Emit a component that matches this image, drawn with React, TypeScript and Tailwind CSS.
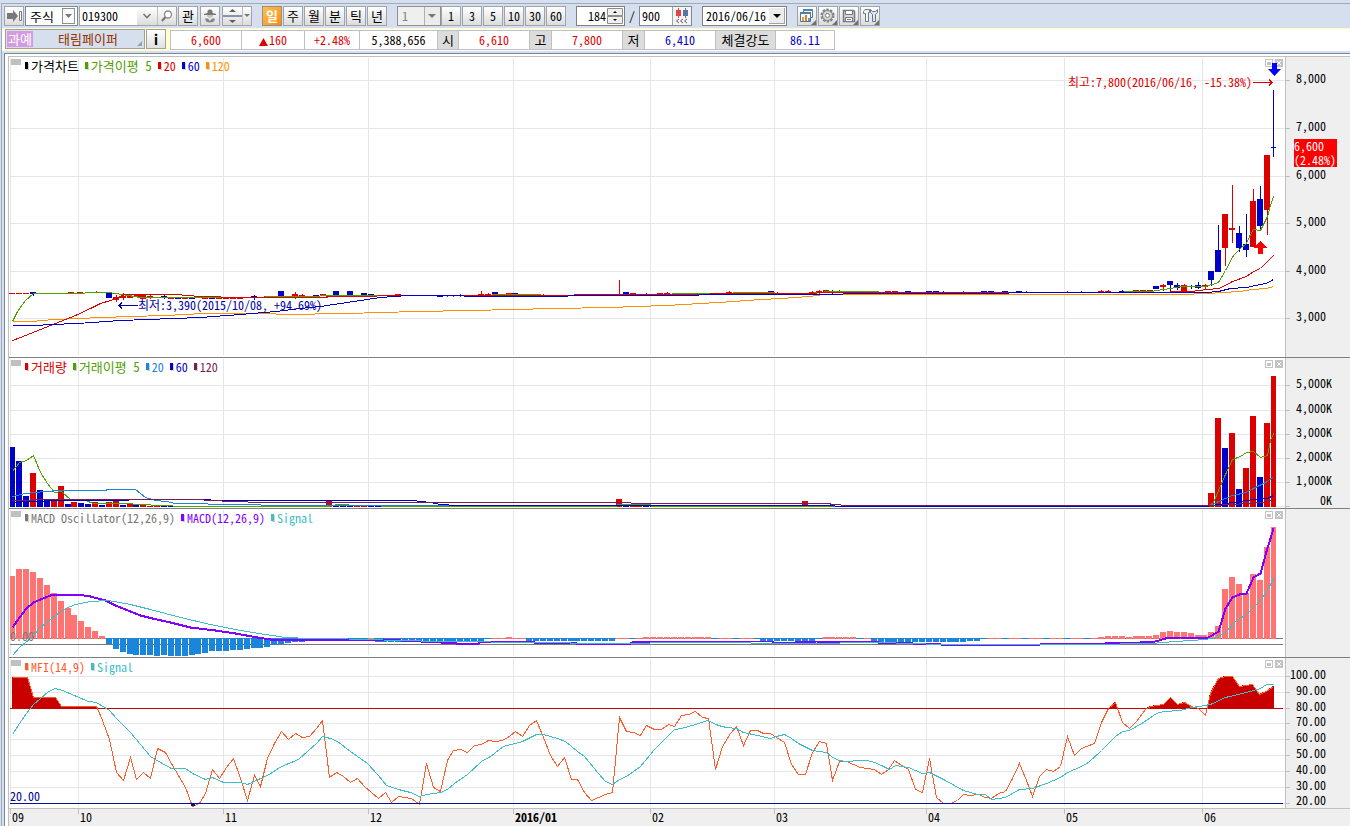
import React from "react";

const RED = "#dc0000";
const BLUE = "#0000c8";
const GREEN = "#50a000";
const ORANGE = "#ff9100";
const SKY = "#1986dc";
const MAROON = "#781e50";
const SALMON = "#ff7373";
const TEAL = "#3cbec8";
const PURPLE = "#8200ff";
const GREY = "#787878";
const CORAL = "#ff5a28";
const GRID = "#e6e6e6";

const LEFT = 9;
const PLOT_WIDTH = 1276;
const BAR_COUNT = 184;
const barX = (i: number) => Math.round(12.4 + (i * 1261) / (BAR_COUNT - 1));
const barBox = (i: number) => {
  if (i === 0) return { x: 10, width: 5 };
  if (i === BAR_COUNT - 1) return { x: 1271, width: 5 };
  return { x: barX(i) - 3, width: 6 };
};

const months = [
  { x: 10, label: "09" },
  { x: 78, label: "10" },
  { x: 223, label: "11" },
  { x: 368, label: "12" },
  { x: 513, label: "2016/01", bold: true },
  { x: 650, label: "02" },
  { x: 774, label: "03" },
  { x: 926, label: "04" },
  { x: 1064, label: "05" },
  { x: 1202, label: "06" },
];

/* ---------- chart data ---------- */

const priceMa5 =
  "12,321 17,311 25,300 33,293 84,293 85,292 108,292 122,294 140,297 230,297 300,296 340,295 400,295 491,295 492,294 540,294 541,295 600,295 640,294 671,294 672,293 732,293 733,292 774,292 775,293 808,293 829,291 878,291 879,292 1015,292 1097,292 1150,291 1170,288 1180,286 1205,286 1218,282 1225,270 1233,255 1240,248 1246,243 1250,234 1253,229 1260,230 1267,216 1270,205 1273,196";
const priceMa20 =
  "12,340 20,337 35,331 60,321 75,315 90,308 100,303 110,300 118,297 124,294 175,294 200,296 240,297 300,297 355,296 400,295 568,295 580,294 700,294 719,293 816,293 817,292 1091,292 1150,292 1190,291 1207,289 1218,288 1225,285 1232,281 1246,276 1253,271 1260,268 1266,262 1273,255";
const priceMa60 =
  "12,325 36,325 50,324 77,323 120,320 200,317 240,314 275,311 300,308 320,306 360,300 380,297 408,295 463,295 464,296 567,296 568,295 698,295 699,294 842,294 843,293 1008,293 1009,292 1205,292 1218,291 1230,288 1246,287 1260,284 1266,283 1273,279";
const priceMa120 =
  "12,321 31,321 53,319 102,317 130,316 165,315 203,313 265,313 285,314 345,313 382,312 415,311 471,310 512,309 554,308 609,307 637,306 664,305 685,304 699,303 719,302 733,301 747,300 761,299 781,298 795,297 809,296 823,294 1180,294 1208,293 1222,292 1240,291 1252,289 1266,288 1273,286";

type Candle = [x: number, top: number, bottom: number, color: string, high?: number, low?: number];
const candles: Candle[] = [
  [12, 293, 294, RED], [19, 293, 294, RED], [26, 293, 294, RED],
  [33, 292, 294, BLUE, 292, 296], [47, 293, 294, RED], [61, 293, 294, RED],
  [71, 292, 293, RED], [80, 292, 293, RED], [96, 292, 293, RED, 291, 293],
  [109, 292, 298, BLUE], [116, 297, 300, RED, 295, 302], [123, 296, 298, RED, 293, 300],
  [130, 296, 298, RED], [137, 295, 297, RED], [143, 295, 299, RED], [150, 296, 298, RED, 295, 299],
  [157, 297, 298, RED], [164, 296, 298, BLUE, 295, 299], [171, 297, 299, RED],
  [178, 297, 299, BLUE], [185, 297, 299, RED], [192, 297, 299, BLUE],
  [199, 296, 298, BLUE], [205, 297, 299, RED], [212, 297, 299, BLUE],
  [219, 297, 299, RED], [226, 297, 299, RED], [233, 298, 299, RED],
  [240, 298, 299, RED], [247, 297, 298, BLUE], [254, 296, 298, BLUE, 295, 300],
  [261, 297, 298, RED], [267, 296, 297, RED], [274, 296, 297, RED],
  [281, 291, 297, BLUE], [288, 296, 298, BLUE], [295, 294, 298, RED, 292, 299],
  [302, 295, 297, RED, 294, 298], [309, 296, 297, RED], [316, 295, 297, BLUE],
  [323, 294, 296, RED], [329, 295, 297, RED], [336, 291, 295, BLUE], [343, 295, 296, RED],
  [350, 291, 295, BLUE], [357, 295, 296, RED], [364, 293, 295, BLUE], [371, 294, 296, BLUE],
  [384, 295, 296, BLUE], [398, 294, 296, RED], [412, 295, 296, RED],
  [426, 295, 296, BLUE], [433, 295, 296, RED], [440, 295, 297, BLUE],
  [447, 295, 296, RED, 295, 297], [453, 295, 296, RED, 295, 297], [460, 295, 296, RED, 294, 297],
  [481, 294, 296, RED, 291, 296], [488, 294, 296, RED, 293, 296], [495, 292, 295, BLUE],
  [509, 293, 295, RED], [515, 293, 295, BLUE], [543, 295, 296, RED, 294, 296],
  [577, 294, 296, BLUE], [619, 294, 295, RED, 280, 295], [626, 292, 295, BLUE], [633, 293, 295, RED],
  [646, 294, 295, RED, 293, 295], [660, 293, 295, RED], [667, 293, 295, RED, 292, 295],
  [729, 292, 294, RED, 291, 294], [771, 291, 293, BLUE], [777, 293, 294, RED, 292, 294],
  [812, 292, 294, RED, 291, 294], [819, 291, 293, RED, 290, 295], [826, 290, 293, RED],
  [832, 292, 293, BLUE, 290, 294], [839, 292, 293, RED, 290, 293],
  [888, 291, 293, RED], [895, 291, 293, RED], [908, 291, 293, BLUE],
  [929, 291, 293, BLUE], [936, 291, 293, BLUE], [943, 292, 293, BLUE, 291, 293],
  [963, 292, 293, RED, 291, 293], [984, 291, 293, BLUE], [991, 291, 293, BLUE],
  [1005, 291, 293, BLUE], [1019, 291, 293, BLUE], [1026, 292, 293, BLUE, 291, 293],
  [1067, 292, 293, RED, 291, 293], [1081, 292, 293, BLUE, 291, 293],
  [1101, 291, 292, RED, 290, 292], [1108, 291, 292, RED, 290, 292], [1122, 291, 292, BLUE, 290, 292],
  [1136, 290, 292, RED], [1143, 290, 292, RED], [1150, 290, 292, RED],
  [1156, 286, 289, BLUE], [1163, 285, 287, RED, 284, 291], [1170, 281, 285, BLUE, 281, 291],
  [1177, 285, 288, BLUE, 283, 290], [1184, 285, 291, RED, 284, 291], [1191, 286, 287, BLUE, 285, 289],
  [1198, 285, 288, BLUE, 282, 289], [1205, 285, 287, RED, 284, 290],
  [1211, 271, 280, BLUE, 271, 286], [1218, 250, 272, BLUE, 225, 272], [1225, 214, 248, RED, 214, 266],
  [1232, 228, 230, RED, 185, 243], [1239, 233, 248, BLUE, 226, 252], [1246, 244, 250, BLUE, 214, 257],
  [1253, 201, 247, RED, 189, 247], [1260, 199, 226, BLUE, 186, 229], [1267, 155, 210, RED, 155, 235],
  [1273, 147, 148, BLUE, 90, 157],
];

const volumeBars: Record<number, [top: number, color: string]> = {
  0: [447, BLUE], 1: [461, BLUE], 2: [496, BLUE], 3: [473, RED], 4: [490, BLUE], 5: [500, BLUE],
  6: [500, RED], 7: [486, RED], 8: [504, BLUE], 9: [502, RED], 10: [503, BLUE], 11: [504, BLUE],
  12: [502, RED], 13: [505, BLUE], 14: [502, RED], 15: [499, RED], 16: [505, BLUE], 17: [503, RED],
  18: [505, BLUE], 19: [504, RED], 46: [501, RED], 88: [499, RED], 115: [501, RED],
  174: [493, RED], 175: [418, RED], 176: [448, BLUE], 177: [433, RED], 178: [489, BLUE],
  179: [468, RED], 180: [416, RED], 181: [477, BLUE], 182: [423, RED], 183: [376, RED],
};
const volMa5 =
  "12,471 19,462 26,460 33,455 40,472 47,483 54,492 61,491 70,499 85,500 93,503 120,503 145,504 155,505 190,506 330,506 336,504 360,505 400,506 616,506 617,504 650,504 651,506 1209,505 1213,502 1218,490 1225,474 1232,459 1240,456 1246,452 1253,451 1260,457 1267,455 1270,440 1273,433";
const volMa20 =
  "12,496 25,493 45,491 61,490 105,490 107,489 135,489 145,497 155,500 166,501 175,503 200,503 215,504 305,505 454,505 1205,506 1211,505 1218,501 1232,495 1246,492 1253,488 1267,481 1273,476";
const volMa60 =
  "12,502 25,501 70,500 190,499 230,500 412,500 430,502 440,504 457,505 1205,506 1211,505 1232,502 1246,500 1260,498 1267,498 1273,495";
const volMa120 =
  "12,500 60,499 195,499 230,501 265,502 630,502 631,503 829,503 831,504 849,505 1211,505 1232,504 1260,502 1273,500";

const oscEarly = [
  576, 569, 569, 572, 578, 585, 593, 601, 608, 615, 621, 627, 631, 636, 644, 649, 652, 654, 655, 655, 655, 656,
  655, 656, 656, 656, 655, 654, 653, 651, 651, 651, 650, 650, 649, 648, 648, 647, 645, 644, 643, 642, 642, 641,
  641, 640, 641, 640, 641, 641, 640, 640,
];
const oscLate = [
  637, 636, 636, 636, 637, 636, 636, 636, 635, 632, 631, 632, 632, 633, 635, 635, 632, 626, 589, 577, 584, 593,
  574, 580, 547, 527,
];
const oscMiddle: [from: number, to: number, y: number][] = [
  [376, 478, 642], [479, 484, 641], [506, 512, 637], [526, 616, 641], [643, 712, 637],
  [760, 815, 641], [823, 857, 637], [871, 878, 641], [878, 965, 642], [966, 980, 641],
];
const oscillator = Array.from({ length: BAR_COUNT }, (_, i) => {
  if (i < oscEarly.length) return oscEarly[i];
  const late = i - (BAR_COUNT - oscLate.length);
  if (late >= 0) return oscLate[late];
  const span = oscMiddle.find(([a, b]) => barX(i) >= a && barX(i) <= b);
  return span ? span[2] : i % 3 ? 638 : 639;
});
const macdLine =
  "12,627 19,617 26,608 33,602 40,599 50,595 55,594 77,594 90,596 105,600 115,605 125,609 140,615 152,618 170,622 190,627 215,630 235,633 257,637 270,639 370,639 400,640 440,642 456,643 478,643 480,641 532,641 534,642 574,642 576,643 630,643 632,642 678,641 772,641 774,643 795,642 816,641 875,641 878,642 910,642 912,643 940,644 980,645 1040,644 1084,643 1105,643 1140,642 1155,641 1165,638 1180,637 1208,637 1218,631 1222,618 1225,608 1232,597 1239,594 1246,593 1253,577 1260,573 1266,551 1270,538 1273,528";
const macdSignal =
  "12,655 20,646 30,638 40,627 55,615 65,608 75,604 90,601 108,600 130,604 150,609 180,617 210,624 240,630 265,634 285,637 310,638 330,638 400,640 440,641 540,642 600,643 700,642 800,643 880,642 940,644 1090,644 1150,643 1175,641 1205,639 1216,637 1225,632 1235,621 1246,614 1260,600 1267,590 1273,578";

const mfiLine =
  "12,677 27,677 33,697 55,697 61,706 96,706 97,708 102,720 109,739 116,772 123,780 130,757 136,779 143,772 150,778 157,748 165,752 172,765 178,775 185,787 192,806 199,803 205,793 212,769 219,778 226,767 233,758 240,778 247,800 254,775 260,786 267,758 274,743 281,731 288,739 295,733 302,737 309,736 316,728 322,720 329,777 336,772 343,776 350,782 357,778 364,786 378,798 385,792 391,802 398,796 411,798 419,804 426,763 433,787 440,791 447,760 453,750 460,749 467,752 474,745 481,744 488,740 495,741 502,740 509,736 515,731 522,736 529,725 536,720 543,737 550,755 557,766 564,757 571,779 577,779 584,792 591,800 605,794 612,792 619,717 626,731 633,732 640,735 646,725 654,729 661,729 668,724 674,726 681,715 688,714 695,711 702,717 708,718 715,769 722,746 730,733 736,726 743,745 750,730 757,730 763,733 770,733 776,737 784,742 791,764 798,774 805,774 812,752 819,741 826,743 832,780 839,761 846,761 860,767 866,768 874,769 881,774 888,769 894,760 901,765 908,769 915,789 922,792 929,758 936,797 943,803 950,803 957,800 963,794 970,795 978,794 985,797 991,798 998,793 1005,791 1012,778 1019,763 1026,780 1032,796 1039,776 1046,769 1053,771 1060,766 1067,736 1074,755 1081,748 1094,743 1101,722 1108,708 1115,702 1122,722 1129,728 1136,721 1145,709 1150,706 1163,704 1170,697 1177,704 1184,702 1191,706 1198,708 1205,715 1210,693 1218,678 1225,676 1232,676 1239,686 1252,684 1259,694 1266,691 1273,686";
const mfiSignal =
  "12,734 19,723 26,713 33,704 40,698 48,691 55,688 62,690 88,701 96,702 109,710 116,718 130,732 140,744 150,756 160,762 171,768 185,768 192,773 205,779 212,777 223,782 240,782 247,784 260,778 267,775 281,766 298,759 308,750 316,743 322,736 330,738 337,741 350,751 367,763 378,775 386,785 398,789 410,792 419,796 426,794 440,792 447,789 454,783 467,774 481,761 490,756 503,746 522,741 536,734 543,734 557,738 565,741 577,751 584,756 598,773 605,781 612,784 619,779 626,776 640,766 654,749 667,736 674,729 681,728 695,724 707,720 718,725 726,727 736,728 743,732 757,735 770,738 776,736 784,734 791,738 798,743 812,750 819,751 826,752 832,757 839,760 846,761 860,760 867,760 874,762 881,765 889,769 895,765 908,767 922,773 929,772 943,779 963,790 977,794 985,794 991,799 1005,797 1019,789 1032,788 1046,783 1060,777 1067,772 1074,769 1081,766 1088,762 1101,750 1115,736 1122,731 1129,730 1143,722 1156,713 1163,711 1180,710 1191,707 1205,705 1210,704 1225,697 1246,692 1260,688 1266,684 1273,684";

/* ---------- toolbar pieces ---------- */

const btn =
  "flex h-5 w-5 shrink-0 items-center justify-center border border-[#a0a4aa] bg-linear-to-b from-white to-[#dcdcdc] text-black";

function IconButton({ label, children }: { label: string; children: React.ReactNode }) {
  return (
    <button type="button" aria-label={label} className={btn}>
      {children}
    </button>
  );
}

function TextButton({ children, active = false }: { children: string; active?: boolean }) {
  return (
    <button
      type="button"
      aria-pressed={active}
      className={
        active
          ? "flex h-5 w-5 shrink-0 items-center justify-center border border-[#909090] bg-linear-to-br from-[#ffc04a] to-[#ff8a00] font-bold text-white"
          : btn
      }
    >
      {children}
    </button>
  );
}

function Corner() {
  return <path d="M18 13v5h-5z" fill="#707070" />;
}

function Toolbar() {
  return (
    <div className="flex h-6 items-start pt-0.5 pl-0.5">
      <IconButton label="이동">
        <svg width="18" height="18" viewBox="0 0 18 18">
          <path d="M2 6h6V3l5 6-5 6v-3H2z" fill="#787878" />
          <path d="M14.5 4.500h2v9h-2z" fill="#fff" stroke="#787878" />
        </svg>
      </IconButton>
      <div className="relative ml-px h-5 w-[53px] shrink-0">
        <select aria-label="종목 구분" className="h-5 w-full appearance-none border border-[#808890] bg-white pl-1 text-[13px] leading-none">
          <option>주식</option>
        </select>
        <svg className="pointer-events-none absolute top-0.5 right-0.5" width="14" height="16" viewBox="0 0 14 16">
          <rect x=".5" y=".5" width="12" height="15" fill="#fafafa" stroke="#909090" />
          <path d="M3 6h7L6.500 10z" fill="#787878" />
        </svg>
      </div>
      <div className="ml-px flex h-5 shrink-0 border border-[#a0a4aa] bg-white">
        <input aria-label="종목코드" defaultValue="019300" className="w-[57px] pl-0.5 outline-none" />
        <button type="button" aria-label="종목 목록" className="flex w-5 items-center justify-center bg-linear-to-b from-white to-[#dcdcdc]">
          <svg width="10" height="8" viewBox="0 0 10 8">
            <path d="M1.500 2 5 5.500 8.500 2" fill="none" stroke="#787878" strokeWidth="1.600" />
          </svg>
        </button>
        <button type="button" aria-label="검색" className="flex w-[19px] items-center justify-center border-l border-[#c0c0c0] bg-linear-to-b from-white to-[#dcdcdc]">
          <svg width="14" height="14" viewBox="0 0 14 14">
            <circle cx="8" cy="5.500" r="3.500" fill="#fff" stroke="#888" strokeWidth="1.300" />
            <path d="M5.500 8 2 12" stroke="#787878" strokeWidth="2" />
          </svg>
        </button>
      </div>
      <div className="ml-px flex gap-0.5 text-[13px]">
        <TextButton>관</TextButton>
        <IconButton label="관심 고객">
          <svg width="16" height="16" viewBox="0 0 16 16">
            <path d="M5.500 5V3L7 1.500h2L10.500 3v2L14 6v1H2V6z" fill="#787878" />
            <path d="M5 7h6v1q-1 2-3 2T5 8z" fill="#c4c4c4" />
            <path d="M3 10.500h3L8 13l2-2.500h3l-1 3q-4 2-8 0z" fill="#888" />
          </svg>
        </IconButton>
        <div className="flex h-5 border border-[#a0a4aa]">
          <button type="button" aria-label="위아래 이동" className="flex w-[19px] items-center justify-center bg-linear-to-b from-white to-[#dcdcdc]">
            <svg width="19" height="18" viewBox="0 0 19 18">
              <path d="M6 5h7L9.500 2z M6 13h7l-3.500 3z" fill="#606060" />
              <path d="M0 8h19v2H0z" fill="#8794a5" />
            </svg>
          </button>
          <button type="button" aria-label="이동 옵션" className="flex w-[9px] items-center justify-center border-l border-[#c0c0c0] bg-linear-to-b from-white to-[#dcdcdc]">
            <svg width="6" height="4" viewBox="0 0 6 4">
              <path d="M0 0h6L3 3z" fill="#787878" />
            </svg>
          </button>
        </div>
      </div>
      <div className="ml-2.5 flex gap-px text-[13px]">
        <TextButton active>일</TextButton>
        <TextButton>주</TextButton>
        <TextButton>월</TextButton>
        <TextButton>분</TextButton>
        <TextButton>틱</TextButton>
        <TextButton>년</TextButton>
      </div>
      <div className="relative ml-2.5 h-5 w-11 shrink-0">
        <select aria-label="간격" className="h-5 w-full appearance-none border border-[#909090] bg-[#efefef] pl-1 leading-none text-[#808080]">
          <option>1</option>
        </select>
        <svg className="pointer-events-none absolute top-px right-px" width="16" height="18" viewBox="0 0 16 18">
          <rect width="16" height="18" fill="#ececec" />
          <path d="M0 0h1v18H0z" fill="#b0b0b0" />
          <path d="M4 7h8l-4 4z" fill="#787878" />
        </svg>
      </div>
      <div className="flex gap-px">
        <TextButton>1</TextButton>
        <TextButton>3</TextButton>
        <TextButton>5</TextButton>
        <TextButton>10</TextButton>
        <TextButton>30</TextButton>
        <TextButton>60</TextButton>
      </div>
      <div className="ml-2.5 flex h-5 shrink-0 border border-[#808080] bg-white">
        <input aria-label="표시 개수" defaultValue="184" className="w-[29px] text-right outline-none" />
        <button type="button" aria-label="개수 조절">
          <svg width="18" height="18" viewBox="0 0 18 18">
            <path d="M1.500 1.500h15v7h-15z M1.500 9.500h15v7h-15z" fill="#f0f0f0" stroke="#8c8c8c" />
            <path d="M7 6h4L9 4z M7 12h4l-2 2z" fill="#000" />
          </svg>
        </button>
      </div>
      <span className="w-3.5 text-center leading-5">/</span>
      <div className="flex h-5 shrink-0 border border-[#808890] bg-white">
        <input aria-label="전체 개수" defaultValue="900" className="w-8 pl-0.5 outline-none" />
        <button type="button" aria-label="데이터 추가" className="border-l border-[#a0a4aa] bg-[#f4f4f4]">
          <svg width="18" height="18" viewBox="0 0 18 18">
            <path d="M3 3h5v6H3z M5 1h1v10H5z" fill="#e04848" />
            <path d="M10 3h5v6h-5z M12 1h1v10h-1z" fill="#5878a0" />
            <path d="m6 12-2.500 2L6 16M10 12l-2.500 2 2.500 2M14 12l-2.500 2 2.500 2" fill="none" stroke="#606060" />
          </svg>
        </button>
      </div>
      <div className="relative ml-2.5 h-5 w-[85px] shrink-0">
        <select aria-label="기준일" className="h-5 w-full appearance-none border border-[#808080] bg-white pl-[3px] leading-none">
          <option>2016/06/16</option>
        </select>
        <svg className="pointer-events-none absolute top-0.5 right-0.5" width="16" height="16" viewBox="0 0 16 16">
          <rect width="16" height="16" fill="#ececec" />
          <path d="M15 0h1v16H0v-1h15z" fill="#a0a0a0" />
          <path d="M4 6h8l-4 4z" fill="#000" />
        </svg>
      </div>
      <div className="ml-2.5 flex gap-px">
        <IconButton label="차트 창">
          <svg width="18" height="18" viewBox="0 0 18 18">
            <path d="M5.500 2.500h9v8h-9z" fill="#fff" stroke="#4a7898" />
            <path d="M5 2h10v2H5z M2 5h11v2H2z" fill="#4a86b0" />
            <path d="M2.500 5.500h10v9h-10z" fill="none" stroke="#4a7898" />
            <path d="M3 7h9v7H3z" fill="#fff" />
            <path d="M4 10h2v4H4z" fill="#f0a020" />
            <path d="M7 8h2v6H7z" fill="#f07820" />
            <path d="M10 11h2v3h-2z" fill="#48a0d8" />
            <Corner />
          </svg>
        </IconButton>
        <IconButton label="차트 설정">
          <svg width="18" height="18" viewBox="0 0 18 18">
            <circle cx="8.500" cy="8.500" r="6" fill="#ddd" stroke="#808080" strokeWidth="2" strokeDasharray="2.400 1.370" />
            <circle cx="8.500" cy="8.500" r="5" fill="#d4d4d4" stroke="#808080" />
            <circle cx="8.500" cy="8.500" r="2" fill="#fff" stroke="#808080" />
            <Corner />
          </svg>
        </IconButton>
        <IconButton label="저장">
          <svg width="18" height="18" viewBox="0 0 18 18">
            <path d="M3.500 3.500h10l1 1v10h-11z" fill="#d8d8d8" stroke="#707880" strokeWidth="1.500" />
            <path d="M5.500 3.500h7v4h-7z M5.500 10.500h7v4h-7z" fill="#fff" stroke="#707880" />
            <path d="M7 12h4v1H7z" fill="#707880" />
            <Corner />
          </svg>
        </IconButton>
        <IconButton label="도구">
          <svg width="18" height="18" viewBox="0 0 18 18">
            <path d="M2.500 4.500 4 2.500h4.500v3H7.500V14.500h-3V6.500h-2z" fill="#f4f4f4" stroke="#707880" />
            <path d="M9.500 2.500v3L11.500 7.500V14.500h3V7.500L16.500 5.500V2.500L14.500 4.500h-3z" fill="#dce6f0" stroke="#607890" />
            <Corner />
          </svg>
        </IconButton>
      </div>
    </div>
  );
}

function QuoteBar() {
  const num = "border border-[#c0c0c0] p-0 text-center";
  const head = "border border-[#c0c0c0] bg-[#dcdcdc] p-0 text-center text-[13px] font-normal";
  return (
    <div className="flex h-[23px] border-t border-[#ffffc8] bg-white pl-0.5">
      <div className="flex h-[22px] shrink-0 bg-[#ffffd2] pr-1">
        <button type="button" className="relative ml-px flex h-5 w-[140px] items-center border border-[#a0a0a0] bg-[#d5dfee] pl-px text-[13px] text-[#963200]">
          <span className="flex h-4 w-[26px] items-center justify-center bg-[#d49be1] text-white">과예</span>
          <span className="flex-1 pr-px text-center">태림페이퍼</span>
          <svg className="absolute right-0.5 bottom-0.5" width="5" height="5" viewBox="0 0 5 5">
            <path d="M5 0v5H0z" fill="#a0a0a0" />
          </svg>
        </button>
        <button type="button" aria-label="종목 정보" className="ml-px flex h-5 w-5 items-center justify-center border border-[#a0a0a0] bg-linear-to-b from-white to-[#e0e0e0] text-sm font-bold">
          i
        </button>
      </div>
      <table className="mt-px h-5 shrink-0 table-fixed border-collapse">
        <tbody>
          <tr className="h-[19px] leading-[18px]">
            <td className={`w-[71px] text-[#dc0000] ${num}`}>6,600</td>
            <td className={`w-[63px] text-[#dc0000] ${num}`}>
              <svg className="mr-px inline-block" width="9" height="8" viewBox="0 0 9 8">
                <path d="M4.500 0 9 8H0z" fill={RED} />
              </svg>
              160
            </td>
            <td className={`w-[55px] text-[#dc0000] ${num}`}>+2.48%</td>
            <td className={`w-[78px] ${num}`}>5,388,656</td>
            <th scope="row" className={`w-[21px] ${head}`}>시</th>
            <td className={`w-[71px] text-[#dc0000] ${num}`}>6,610</td>
            <th scope="row" className={`w-[22px] ${head}`}>고</th>
            <td className={`w-[71px] text-[#dc0000] ${num}`}>7,800</td>
            <th scope="row" className={`w-[22px] ${head}`}>저</th>
            <td className={`w-[71px] text-[#0000c8] ${num}`}>6,410</td>
            <th scope="row" className={`w-[60px] ${head}`}>체결강도</th>
            <td className={`w-[59px] text-[#0000c8] ${num}`}>86.11</td>
          </tr>
        </tbody>
      </table>
    </div>
  );
}

/* ---------- chart pieces ---------- */

interface LegendItem {
  label: string;
  color: string;
  korean?: boolean;
}

interface Tick {
  y: number;
  label: string;
  labelY?: number;
}

interface PanelProps {
  name: string;
  top: number;
  height: number;
  legend: LegendItem[];
  ticks: Tick[];
  labelEnd: number;
  heightClass: string;
  borderClass: string;
  overlay?: React.ReactNode;
  axisOverlay?: React.ReactNode;
  children: React.ReactNode;
}

function Line({ points, color, width = 1 }: { points: string; color: string; width?: number }) {
  return (
    <polyline
      points={points}
      fill="none"
      stroke={color}
      strokeWidth={width}
      transform="translate(.5 .5)"
      shapeRendering="crispEdges"
    />
  );
}

function WindowButtons() {
  return (
    <div className="absolute top-0.5 right-0.5 flex gap-0.5">
      <button type="button" aria-label="최대화">
        <svg width="8" height="8" viewBox="0 0 8 8" className="block" shapeRendering="crispEdges">
          <path d="M0 0h8v8H0z" fill="#c3c3c3" />
          <path d="M1 1h6v6H1z" fill="#fff" />
          <path d="M2 3h4v3H2z" fill="#c3c3c3" />
        </svg>
      </button>
      <button type="button" aria-label="닫기">
        <svg width="8" height="8" viewBox="0 0 8 8" className="block" shapeRendering="crispEdges">
          <path d="M0 0h8v8H0z" fill="#c3c3c3" />
          <path d="M2 2h1v1H2zM5 2h1v1H5zM3 3h2v2H3zM2 5h1v1H2zM5 5h1v1H5z" fill="#fff" />
        </svg>
      </button>
    </div>
  );
}

function Panel(p: PanelProps) {
  return (
    <section aria-label={p.name} className={`flex ${p.borderClass}`}>
      <div className={`relative min-w-0 flex-1 border-r border-[#c0c0c0] bg-white ${p.heightClass}`}>
        <svg
          className="block h-full w-full"
          viewBox={`${LEFT} ${p.top} ${PLOT_WIDTH} ${p.height}`}
          preserveAspectRatio="none"
          shapeRendering="crispEdges"
        >
          {months.map((m) => (
            <rect key={m.x} x={m.x} y={p.top + 1} width="1" height={p.height - 3} fill={GRID} />
          ))}
          {p.ticks.map((t) => (
            <rect key={t.y} x="10" y={t.y} width={PLOT_WIDTH - 1} height="1" fill={GRID} />
          ))}
          {p.children}
        </svg>
        <span className="absolute top-0.5 left-0.5 h-1.5 w-2.5 bg-[#c0c0c0]" />
        <div className="absolute top-px left-4 flex gap-1.5 leading-4">
          {p.legend.map((item) => (
            <span
              key={item.label}
              className={`flex items-center gap-0.5 ${item.korean ? "text-[13px] leading-4" : ""}`}
              style={{ color: item.color }}
            >
              <svg width="4" height="8" viewBox="0 0 4 8" shapeRendering="crispEdges">
                <path d="M1 1h3v7H1z" fill="#d0d0d0" />
                <path d="M0 0h3v7H0z" fill="currentColor" />
              </svg>
              {item.label}
            </span>
          ))}
        </div>
        <WindowButtons />
        {p.overlay}
      </div>
      <div className="relative w-16 shrink-0">
        <svg className="block" width="64" height={p.height} viewBox={`1286 ${p.top} 64 ${p.height}`}>
          {p.ticks.map((t) => (
            <g key={t.y}>
              <rect x="1286" y={t.y} width="4" height="1" fill="#c0c0c0" />
              <text x={p.labelEnd} y={(t.labelY ?? t.y - 1) + 4} textAnchor="end" fill="#000">
                {t.label}
              </text>
            </g>
          ))}
        </svg>
        {p.axisOverlay}
      </div>
    </section>
  );
}

function Candles() {
  return (
    <g>
      {candles.map(([x, top, bottom, color, high, low]) => (
        <g key={x} fill={color}>
          <rect x={x === 1273 ? 1271 : x - 3} y={top} width={x === 1273 ? 5 : 6} height={bottom - top} />
          {high !== undefined && low !== undefined && <rect x={x} y={high} width="1" height={low - high} />}
        </g>
      ))}
    </g>
  );
}

function PricePanel() {
  return (
    <Panel
      name="가격차트"
      top={57}
      height={300}
      heightClass="h-[300px]"
      borderClass="border-b border-[#808080]"
      labelEnd={1326}
      legend={[
        { label: "가격차트", color: "#000000", korean: true },
        { label: "가격이평 5", color: GREEN, korean: true },
        { label: "20", color: RED },
        { label: "60", color: BLUE },
        { label: "120", color: ORANGE },
      ]}
      ticks={[
        { y: 80, label: "8,000" },
        { y: 128, label: "7,000" },
        { y: 176, label: "6,000" },
        { y: 223, label: "5,000" },
        { y: 271, label: "4,000" },
        { y: 318, label: "3,000" },
      ]}
      overlay={
        <>
          <div className="absolute top-[17px] right-3 flex items-center leading-4 text-[#dc0000]">
            최고:7,800(2016/06/16, -15.38%)
            <svg width="21" height="7" viewBox="0 0 21 7" shapeRendering="crispEdges">
              <path d="M1 3.500h20M17 .5l3 3-3 3" fill="none" stroke="currentColor" />
            </svg>
          </div>
          <div className="absolute top-60 left-[109px] flex items-center leading-4 text-[#0000a0]">
            <svg width="20" height="7" viewBox="0 0 20 7" shapeRendering="crispEdges">
              <path d="M20 3.500H0M4 .5l-3 3 3 3" fill="none" stroke="currentColor" />
            </svg>
            최저:3,390(2015/10/08, +94.69%)
          </div>
          <svg className="absolute top-1.5 right-1" width="13" height="13" viewBox="0 0 13 13">
            <path d="M4 0h5v6h4l-6.500 7L0 6h4z" fill="#0000ff" />
          </svg>
        </>
      }
      axisOverlay={
        <div className="absolute top-[82px] left-2 h-7 w-[43px] bg-[#ff0000] leading-[14px] text-white">
          <span className="block">6,600</span>
          <span className="block">(2.48%)</span>
        </div>
      }
    >
      <Candles />
      <Line points={priceMa120} color={ORANGE} />
      <Line points={priceMa5} color={GREEN} />
      <Line points={priceMa20} color={RED} />
      <Line points={priceMa60} color={BLUE} />
      <path d="M1260 241l7 7h-4v6h-5v-6h-5z" fill="#ff0000" />
    </Panel>
  );
}

function VolumePanel() {
  return (
    <Panel
      name="거래량"
      top={358}
      height={150}
      heightClass="h-[150px]"
      borderClass="border-b border-[#808080]"
      labelEnd={1332}
      legend={[
        { label: "거래량", color: RED, korean: true },
        { label: "거래이평 5", color: GREEN, korean: true },
        { label: "20", color: SKY },
        { label: "60", color: BLUE },
        { label: "120", color: MAROON },
      ]}
      ticks={[
        { y: 385, label: "5,000K" },
        { y: 410, label: "4,000K" },
        { y: 434, label: "3,000K" },
        { y: 458, label: "2,000K" },
        { y: 482, label: "1,000K" },
        { y: 506, label: "0K", labelY: 501 },
      ]}
    >
      {Array.from({ length: BAR_COUNT }, (_, i) => {
        const [top, color] = volumeBars[i] ?? [506, i % 5 < 2 ? RED : BLUE];
        const { x, width } = barBox(i);
        return <rect key={i} x={x} y={top} width={width} height={507 - top} fill={color} />;
      })}
      <Line points={volMa5} color={GREEN} />
      <Line points={volMa20} color={SKY} />
      <Line points={volMa60} color={BLUE} />
      <Line points={volMa120} color={MAROON} />
    </Panel>
  );
}

function MacdPanel() {
  return (
    <Panel
      name="MACD"
      top={509}
      height={148}
      heightClass="h-[148px]"
      borderClass="border-b border-[#808080]"
      labelEnd={1326}
      legend={[
        { label: "MACD Oscillator(12,26,9)", color: GREY },
        { label: "MACD(12,26,9)", color: PURPLE },
        { label: "Signal", color: TEAL },
      ]}
      ticks={[]}
      overlay={<span className="absolute top-[119px] left-px leading-4 text-[#787878]">0.00</span>}
    >
      <rect x="10" y="638" width="1273" height="1" fill="#787878" />
      <rect x="10" y="644" width="1273" height="1" fill="#787878" />
      {oscillator.map((y, i) => {
        const { x, width } = barBox(i);
        return y < 639 ? (
          <rect key={i} x={x} y={y} width={width} height={639 - y} fill={SALMON} />
        ) : (
          <rect key={i} x={x} y={638} width={width} height={Math.max(1, y - 638)} fill={SKY} />
        );
      })}
      <Line points={macdLine} color={PURPLE} width={2} />
      <Line points={macdSignal} color={TEAL} />
    </Panel>
  );
}

function MfiPanel() {
  return (
    <Panel
      name="MFI"
      top={658}
      height={150}
      heightClass="h-[150px]"
      borderClass="border-b border-[#c0c0c0]"
      labelEnd={1326}
      legend={[
        { label: "MFI(14,9)", color: CORAL },
        { label: "Signal", color: TEAL },
      ]}
      ticks={[
        { y: 676, label: "100.00" },
        { y: 692, label: "90.00" },
        { y: 708, label: "80.00" },
        { y: 723, label: "70.00" },
        { y: 739, label: "60.00" },
        { y: 755, label: "50.00" },
        { y: 771, label: "40.00" },
        { y: 787, label: "30.00" },
        { y: 803, label: "20.00", labelY: 801 },
      ]}
      overlay={<span className="absolute top-[130px] left-px leading-4 text-[#000096]">20.00</span>}
    >
      <defs>
        <clipPath id="overbought">
          <rect x="9" y="658" width="1276" height="50" />
        </clipPath>
      </defs>
      <polygon points={`12,709 ${mfiLine} 1274,686 1274,709`} fill="#c80000" clipPath="url(#overbought)" />
      <rect x="10" y="708" width="1273" height="1" fill="#c80000" />
      <Line points={mfiLine} color={CORAL} />
      <rect x="10" y="803" width="1273" height="1" fill="#001496" />
      <rect x="191" y="804" width="4" height="2" fill="#001496" />
      <Line points={mfiSignal} color={TEAL} />
    </Panel>
  );
}

function DateAxis() {
  return (
    <div className="flex h-[17px]">
      <div className="relative flex-1">
        {months.map((m) => (
          <span
            key={m.x}
            className={`absolute top-0 h-[5px] border-l border-[#c0c0c0] pl-px leading-[15px] ${m.bold ? "font-bold" : ""}`}
            style={{ left: `${((m.x - LEFT) / (PLOT_WIDTH + 1)) * 100}%` }}
          >
            {m.label}
          </span>
        ))}
      </div>
      <div className="w-16 shrink-0" />
    </div>
  );
}

export default function App() {
  return (
    <div className="min-h-screen overflow-hidden bg-[#d5dfee] pt-[3px] pl-px font-['Noto_Sans_Mono_CJK_KR','Noto_Sans_CJK_KR',sans-serif] text-xs text-black">
      <div className="border-t border-l border-[#a0aabe]">
        <Toolbar />
        <QuoteBar />
        <main className="mt-0.5 ml-0.5 border-t border-l border-[#7887a0] bg-white pt-0.5 pl-[3px]">
          <div className="border-t border-l border-[#c0c0c0] bg-[#efefef]">
            <PricePanel />
            <VolumePanel />
            <MacdPanel />
            <MfiPanel />
            <DateAxis />
          </div>
        </main>
      </div>
    </div>
  );
}
